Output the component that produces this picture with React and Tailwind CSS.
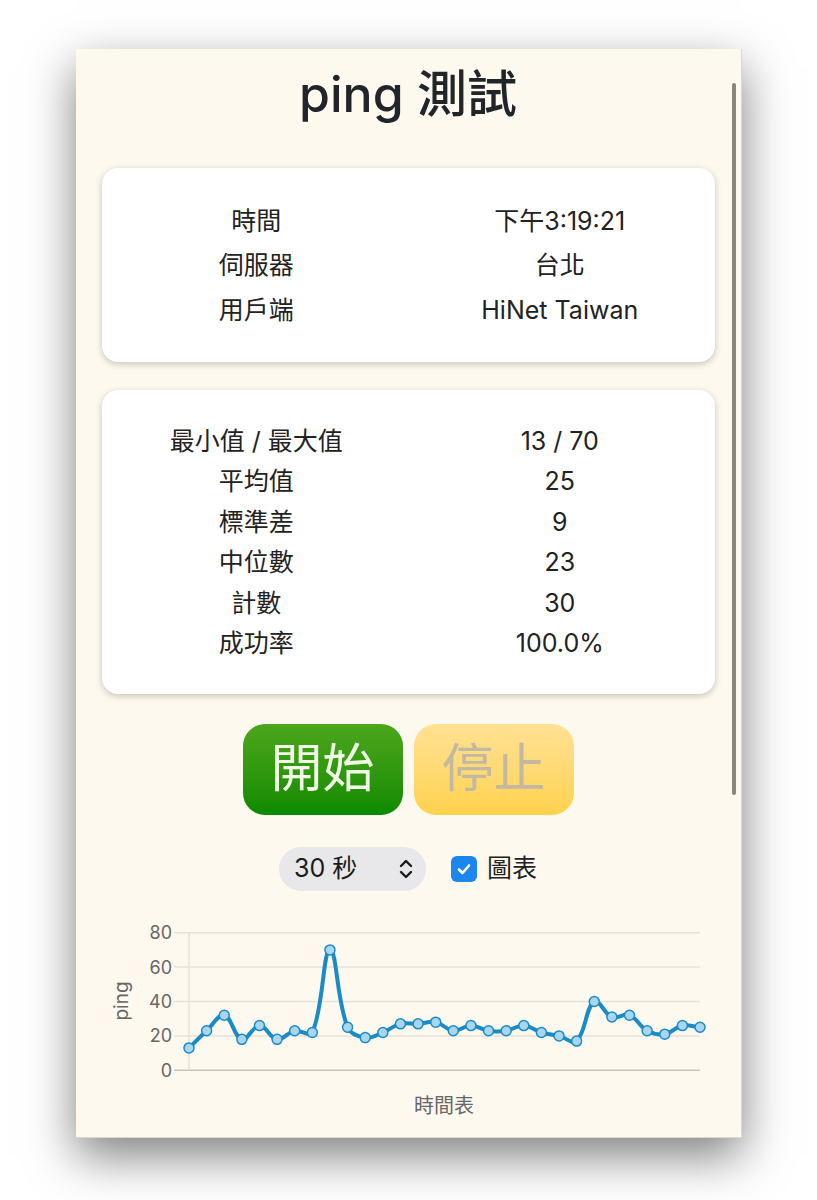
import React from "react";

// ping 測試 — single panel with summary cards, controls and a latency chart

const PINGS = [13, 23, 32, 18, 26, 18, 23, 22, 70, 25, 19, 22, 27, 27, 28, 23, 26, 23, 23, 26, 22, 20, 17, 40, 31, 32, 23, 21, 26, 25];

const INFO = [
  ["時間", "下午3:19:21"],
  ["伺服器", "台北"],
  ["用戶端", "HiNet Taiwan"],
];

const STATS = [
  ["最小值 / 最大值", "13 / 70"],
  ["平均值", "25"],
  ["標準差", "9"],
  ["中位數", "23"],
  ["計數", "30"],
  ["成功率", "100.0%"],
];

const FONT = { fontFamily: '"Inter", "Noto Sans CJK TC", "Noto Sans", sans-serif' };

// chart geometry (svg coords)
const X0 = 113;
const X1 = 624;
const Y0 = 154.3;
const Y80 = 16.7;
const sx = (i) => X0 + ((X1 - X0) * i) / (PINGS.length - 1);
const sy = (v) => Y0 - ((Y0 - Y80) * v) / 80;

function smoothPath(pts, t = 0.4) {
  const cps = pts.map((cur, i) => {
    const prev = pts[i - 1] || cur;
    const next = pts[i + 1] || cur;
    const d01 = Math.hypot(cur.x - prev.x, cur.y - prev.y);
    const d12 = Math.hypot(next.x - cur.x, next.y - cur.y);
    const s01 = d01 / (d01 + d12 || 1);
    const s12 = d12 / (d01 + d12 || 1);
    const fa = t * s01;
    const fb = t * s12;
    return {
      a: { x: cur.x - fa * (next.x - prev.x), y: cur.y - fa * (next.y - prev.y) },
      b: { x: cur.x + fb * (next.x - prev.x), y: cur.y + fb * (next.y - prev.y) },
    };
  });
  let d = `M${pts[0].x},${pts[0].y}`;
  for (let i = 1; i < pts.length; i++) {
    const c1 = cps[i - 1].b;
    const c2 = cps[i].a;
    d += ` C${c1.x},${c1.y} ${c2.x},${c2.y} ${pts[i].x},${pts[i].y}`;
  }
  return d;
}

function Chart() {
  const pts = PINGS.map((v, i) => ({ x: sx(i), y: sy(v) }));
  return (
    <svg width="666" height="223" viewBox="0 0 666 223" className="block">
      {[0, 20, 40, 60, 80].map((v) => (
        <g key={v}>
          <line x1="98" x2="624" y1={sy(v)} y2={sy(v)} stroke={v === 0 ? "#c9c5bd" : "#e6e2da"} strokeWidth="1.5" />
          <text x="96" y={sy(v) + 6.5} textAnchor="end" fontSize="18" fill="#666" style={FONT}>
            {v}
          </text>
        </g>
      ))}
      <line x1={X0} x2={X0} y1={Y80} y2={Y0} stroke="#e6e2da" strokeWidth="1.5" />
      <text x="0" y="0" transform="translate(52 85) rotate(-90)" textAnchor="middle" fontSize="19" fill="#666" style={FONT}>
        ping
      </text>
      <text x="368" y="197" textAnchor="middle" fontSize="20" fill="#666" style={FONT}>
        時間表
      </text>
      <path d={smoothPath(pts)} fill="none" stroke="#1a8bc5" strokeWidth="4" strokeLinejoin="round" />
      {pts.map((p, i) => (
        <circle key={i} cx={p.x} cy={p.y} r="5" fill="#a8d6ef" stroke="#1a8bc5" strokeWidth="1.5" />
      ))}
    </svg>
  );
}

function Card({ rows, rowClass, padClass }) {
  return (
    <div className={`bg-white rounded-2xl shadow-[0_2px_7px_rgba(0,0,0,0.22)] px-[3px] ${padClass}`}>
      {rows.map(([k, v]) => (
        <div key={k} className={`grid grid-cols-2 items-center text-[25px] text-[#222] ${rowClass}`}>
          <div className="text-center">{k}</div>
          <div className="text-center">{v}</div>
        </div>
      ))}
    </div>
  );
}

export default function App() {
  return (
    <div className="min-h-screen bg-white pt-[49px]" style={FONT}>
      <div className="relative mx-auto w-[666px] h-[1089px] overflow-hidden bg-[#fdf9ef] border-r border-b border-[#ddd8cc] shadow-[0_18px_45px_rgba(0,0,0,0.5)]">
        <div className="px-[26px] pt-[17px]">
          <h1 className="text-center text-[50px] leading-[56px] font-medium text-[#212529] mb-[46px]">ping 測試</h1>
          <Card rows={INFO} rowClass="h-[44.5px]" padClass="pt-[31px] pb-[29px]" />
          <div className="h-[28px]" />
          <Card rows={STATS} rowClass="h-[40.4px]" padClass="pt-[32px] pb-[30px]" />
          <div className="flex justify-center gap-[11px] mt-[30px]">
            <button className="w-[160px] h-[91px] rounded-[22px] bg-gradient-to-b from-[#4ba71c] to-[#088a00] text-[52px] text-[#f2f8e6]">
              開始
            </button>
            <button disabled className="w-[160px] h-[91px] rounded-[22px] bg-gradient-to-b from-[#ffe193] to-[#ffd24c] text-[52px] text-[#c2b9a3]">
              停止
            </button>
          </div>
          <div className="flex justify-center items-center mt-[32px] h-[44px]">
            <div className="flex items-center w-[147px] h-[44px] rounded-full bg-[#e8e8ea] pl-[15px] pr-[13px] text-[25px] text-[#1a1a1a]">
              <span className="flex-1">30 秒</span>
              <svg width="14" height="20" viewBox="0 0 14 20" fill="none" stroke="#1a1a1a" strokeWidth="2.4" strokeLinecap="round" strokeLinejoin="round">
                <path d="M2 7 L7 2 L12 7" />
                <path d="M2 13 L7 18 L12 13" />
              </svg>
            </div>
            <div className="ml-[25px] w-[26px] h-[26px] rounded-[6px] bg-[#1b86ee] flex items-center justify-center">
              <svg width="16" height="16" viewBox="0 0 16 16" fill="none" stroke="white" strokeWidth="2.6" strokeLinecap="round" strokeLinejoin="round">
                <path d="M3 8.5 L6.5 12 L13 4.5" />
              </svg>
            </div>
            <span className="ml-[10px] text-[25px] text-[#222]">圖表</span>
          </div>
        </div>
        <div className="mt-[25px]">
          <Chart />
        </div>
        <div className="absolute right-[5px] top-[34px] w-[4px] h-[712px] rounded-full bg-[#8a857d]" />
      </div>
    </div>
  );
}
